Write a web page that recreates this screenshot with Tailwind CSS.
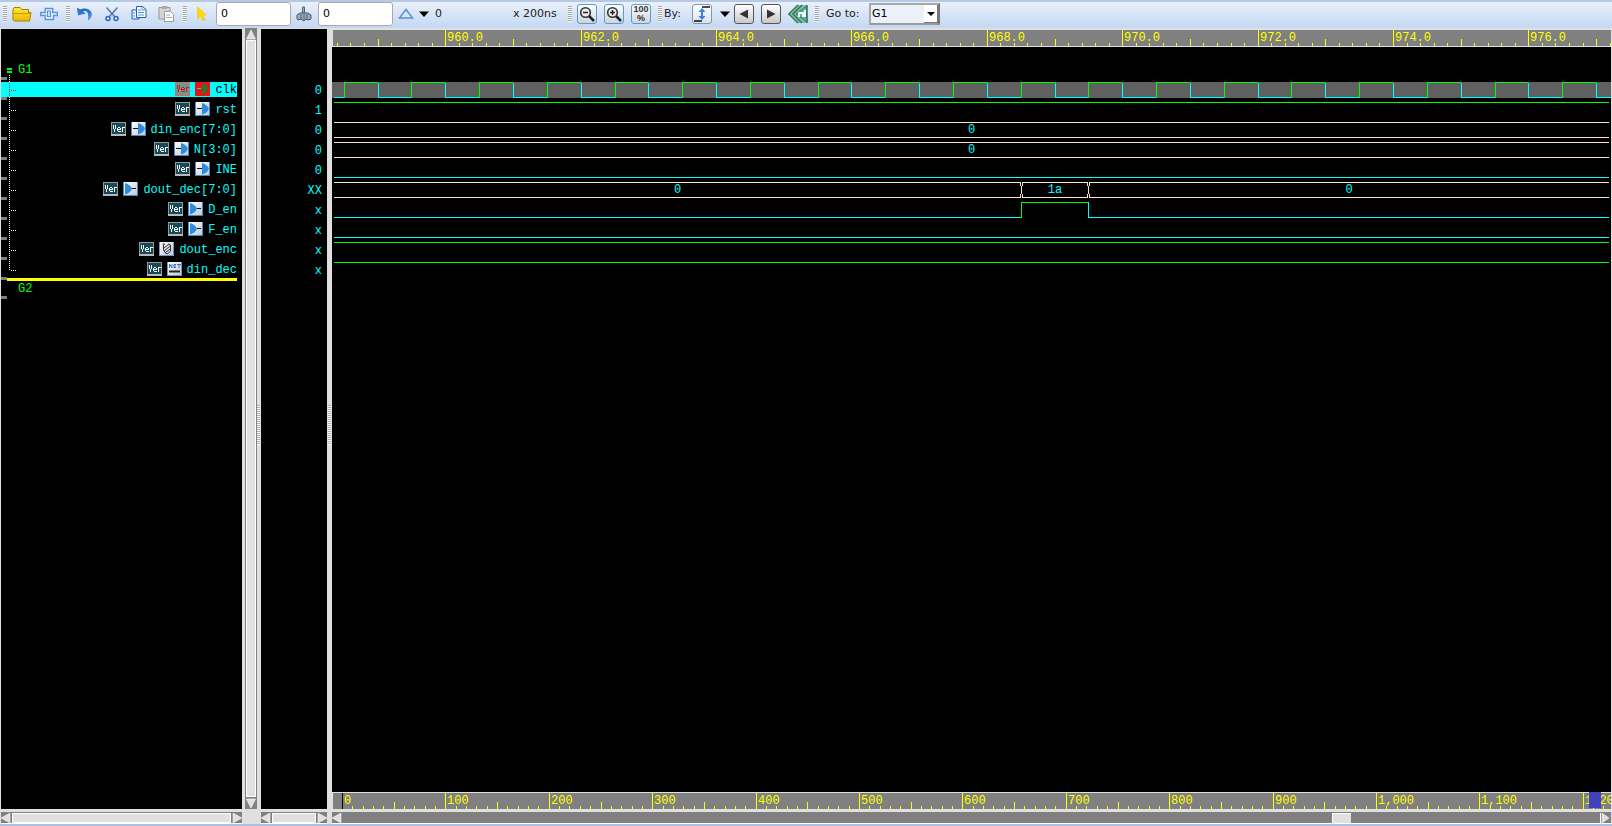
<!DOCTYPE html>
<html lang="en">
<head>
<meta charset="utf-8">
<title>Waveform viewer</title>
<script src="https://cdn.jsdelivr.net/npm/@tailwindcss/browser@4"></script>
</head>
<body class="h-screen overflow-hidden flex flex-col bg-[#e0e0e0] font-['DejaVu_Sans',sans-serif] text-[11px] text-[#222]">

<svg class="absolute size-0" aria-hidden="true">
  <defs>
    <linearGradient id="gold" x1="0" y1="0" x2="0" y2="1"><stop offset="0" stop-color="#ffe93a"/><stop offset="1" stop-color="#eeb800"/></linearGradient>
    <linearGradient id="blue" x1="0" y1="0" x2="0" y2="1"><stop offset="0" stop-color="#1f62b8"/><stop offset="1" stop-color="#5a9be0"/></linearGradient>
    <linearGradient id="tile" x1="0" y1="0" x2="1" y2="1"><stop offset="0" stop-color="#fff"/><stop offset="1" stop-color="#bcc6d0"/></linearGradient>
  </defs>
  <symbol id="ver" viewBox="0 0 15 14">
    <path d="M0 0h15v14H0z" fill="#8e9a9c"/><path d="M0 12h15v2H0z" fill="#b8b8b8"/><path d="M1 1h13v11H1z" fill="#174a58"/>
    <path d="M2 3h1v4H2zM3 7h1v3H3zM4 3h1v4H4zM6 6h1v3H6zM7 5h2v1H7zM9 6h1v1H9zM7 7h3v1H7zM7 9h3v1H7zM11 5h1v5h-1zM12 5h2v1h-2z" fill="#fff"/>
  </symbol>
  <symbol id="verred" viewBox="0 0 15 14">
    <path d="M0 0h15v14H0z" fill="#b07a78"/><path d="M1 1h13v11H1z" fill="#689a94"/>
    <path d="M2 3h1v4H2zM3 7h1v3H3zM4 3h1v4H4zM6 6h1v3H6zM7 5h2v1H7zM9 6h1v1H9zM7 7h3v1H7zM7 9h3v1H7zM11 5h1v5h-1zM12 5h2v1h-2z" fill="#e01010"/>
  </symbol>
  <symbol id="in" viewBox="0 0 15 14">
    <path d="M0 0h15v14H0z" fill="url(#tile)"/><path d="M.5 0v14M14.500 0v14M0 13.500h15" stroke="#4a86c0" fill="none"/>
    <path d="M7 1c4 1 6 3.500 7 5.500-1 3-3 5-7 6z" fill="#2f8be0"/><path d="M2 6.500h5" stroke="#111"/>
  </symbol>
  <symbol id="inred" viewBox="0 0 15 14">
    <path d="M0 0h15v14H0z" fill="#e81414"/><path d="M7 1c4 1 6 3.500 6 5.500-1 3-3 5-6 6z" fill="#35702c"/><path d="M2 6.500h4" stroke="#35c8c8"/>
  </symbol>
  <symbol id="out" viewBox="0 0 15 14">
    <path d="M0 0h15v14H0z" fill="url(#tile)"/><path d="M.5 0v14M14.500 0v14M0 13.500h15" stroke="#4a86c0" fill="none"/>
    <path d="M2 1c4 1 6 3.500 7 5.500-1 3-3 5-7 6z" fill="#2f8be0"/><path d="M9 6.500h4" stroke="#111"/>
  </symbol>
  <symbol id="reg" viewBox="0 0 15 14">
    <path d="M0 0h15v14H0z" fill="url(#tile)"/><path d="M14.500 0v14M.5 0v14M0 13.500h15" stroke="#6f98c0" fill="none"/>
    <path d="M3.500 2h2l-1 1v5l2 3 2 1 3-3V3l-2-1M5 6l5-4M5 9l6-5M6 11l5-4" fill="none" stroke="#333"/>
  </symbol>
  <symbol id="net" viewBox="0 0 15 14">
    <path d="M0 0h15v14H0z" fill="url(#tile)"/><path d="M14.500 0v14M.5 0v14M0 13.500h15" stroke="#6f98c0" fill="none"/>
    <path d="M2.500 6V2l2.500 4V2M9 2.500H7v3h2M7 4h2M10 2.500h4M12 2v4" fill="none" stroke="#2f78b8"/><path d="M2 9.500h11" stroke="#222" stroke-width="2"/>
  </symbol>
</svg>

<!-- Toolbar -->
<header class="h-7 shrink-0 flex items-center border-t-2 border-[#b5c8e4] bg-linear-to-b from-[#eaf1fa] to-[#c3d7f3] pb-[2px]">
  <i class="ml-[3px] w-1 h-4 bg-[repeating-linear-gradient(#a8a8a8_0_1px,#f6f6f6_1px_2px)]"></i>
  <button aria-label="Open" class="ml-[5px]"><svg class="w-5 h-5" viewBox="0 0 20 20"><path d="M1 16V5.500l1-2h6l2 2h6.500v3H19l-1.500 8.500H2.500z" fill="url(#gold)" stroke="#a87f00"/><path d="M1.500 9.500H18" fill="none" stroke="#c89c00"/></svg></button>
  <button aria-label="Signals" class="ml-2"><svg class="w-[18px] h-5" viewBox="0 0 18 20"><path d="M.7 8.500h4.500v-4h7.500v4h4.600v3h-3.800v4H5.200v-4H.7z" fill="#eaf2fc" stroke="#5a94dc" stroke-width="1.400"/><path d="M7.500 7h3v5.500h-3z" fill="#d8e6f7" stroke="#5a94dc" stroke-width="1.200"/></svg></button>
  <i class="ml-2 w-1 h-4 bg-[repeating-linear-gradient(#a8a8a8_0_1px,#f6f6f6_1px_2px)]"></i>
  <button aria-label="Undo" class="ml-[7px]"><svg class="w-4 h-5" viewBox="0 0 16 20"><path d="M0 3.500l1 8 8-2-3-2c4-1.500 6 1 5 8.500h1c3-3 4-7 1-9.500C10 4 6 4 3 5.500z" fill="url(#blue)"/></svg></button>
  <button aria-label="Cut" class="ml-3"><svg class="w-[14px] h-5" viewBox="0 0 14 20"><path d="M1.500 3.500L10 13M12.500 3.500L4 13" stroke="#5578a4" stroke-width="1.500"/><circle cx="3" cy="14.500" r="2" fill="none" stroke="#2868c4" stroke-width="1.500"/><circle cx="11" cy="14.500" r="2" fill="none" stroke="#2868c4" stroke-width="1.500"/></svg></button>
  <button aria-label="Copy" class="ml-3"><svg class="w-4 h-5" viewBox="0 0 16 20"><path d="M1 6h7v9H1z" fill="#eaf2fc" stroke="#1f62b8"/><path d="M5.500 2.500h6l3.500 3v8H5.500z" fill="#fff" stroke="#1f62b8"/><path d="M11 3v3h4M7 6h3M7 8.500h6M7 11h6M2 9h2M2 12h2" fill="none" stroke="#5a90d4"/></svg></button>
  <button aria-label="Paste" class="ml-[11px]"><svg class="w-4 h-5" viewBox="0 0 16 20"><path d="M1 3.500h11V15H1z" fill="#d4d4d4" stroke="#9a9a9a"/><path d="M4 2h5v3H4z" fill="#aaa"/><path d="M6.500 7.500h6l3 3v7h-9z" fill="#fff" stroke="#999"/><path d="M8 11h4M8 13.500h6" stroke="#aaa"/></svg></button>
  <i class="ml-[9px] w-1 h-4 bg-[repeating-linear-gradient(#a8a8a8_0_1px,#f6f6f6_1px_2px)]"></i>
  <button aria-label="Select" class="ml-[10px]"><svg class="w-[10px] h-5" viewBox="0 0 10 20"><path d="M.5 3v12l3-3 2.500 5 2-1-2-5h3.500z" fill="#ffdc00" stroke="#e8c000" stroke-width=".5"/></svg></button>
  <input aria-label="Cursor time" value="0" class="ml-[9px] w-[75px] h-6 bg-white border border-[#aaa] rounded-[3px] px-1 pb-px text-black">
  <button aria-label="Marker" class="ml-[5px]"><svg class="w-4 h-5" viewBox="0 0 16 20"><path d="M6.500 3h2v6h-2z" fill="#9cb0c4" stroke="#51657a"/><path d="M1 11l3-2h8l3 2v4l-3 1-2-1-2 2-3-2-3 1-1-1z" fill="#9cabb8" stroke="#465664"/><path d="M5 10v5M8 10v6M11 10v5" stroke="#51657a"/></svg></button>
  <input aria-label="Marker time" value="0" class="ml-[6px] w-[75px] h-6 bg-white border border-[#aaa] rounded-[3px] px-1 pb-px text-black">
  <button aria-label="Delta" class="ml-[5px]"><svg class="w-4 h-5" viewBox="0 0 16 20"><path d="M8 5.500L1.500 14h13z" fill="#d8e6f8" stroke="#5a90d4" stroke-width="1.500"/></svg></button>
  <button aria-label="Delta options" class="ml-[5px]"><svg class="w-[10px] h-5" viewBox="0 0 10 20"><path d="M0 7.500h10L5 13z" fill="#000"/></svg></button>
  <output class="ml-[6px] w-[78px]">0</output>
  <span class="w-[46px]">x 200ns</span>
  <i class="ml-[9px] w-1 h-4 bg-[repeating-linear-gradient(#a8a8a8_0_1px,#f6f6f6_1px_2px)]"></i>
  <button aria-label="Zoom out" class="ml-[5px] size-5 rounded-[3px] border border-[#5b9bc8] bg-linear-to-b from-white to-[#cdd5dc]"><svg class="size-[18px]" viewBox="0 0 18 18"><circle cx="7.500" cy="7.500" r="4.800" fill="#eee" stroke="#333" stroke-width="1.600"/><path d="M5 7.500h5" stroke="#222" stroke-width="1.500"/><path d="M11 11l5 5" stroke="#222" stroke-width="2.500"/></svg></button>
  <button aria-label="Zoom in" class="ml-[7px] size-5 rounded-[3px] border border-[#5b9bc8] bg-linear-to-b from-white to-[#cdd5dc]"><svg class="size-[18px]" viewBox="0 0 18 18"><circle cx="7.500" cy="7.500" r="4.800" fill="#eee" stroke="#333" stroke-width="1.600"/><path d="M5 7.500h5M7.500 5v5" stroke="#222" stroke-width="1.500"/><path d="M11 11l5 5" stroke="#222" stroke-width="2.500"/></svg></button>
  <button aria-label="Zoom 100%" class="ml-[7px] size-5 rounded-[3px] border border-[#5b9bc8] bg-linear-to-b from-white to-[#cdd5dc] flex flex-col items-center justify-center font-['Liberation_Sans',sans-serif] text-[9px] leading-[9px] font-bold text-[#333]"><span>100</span><span>%</span></button>
  <i class="ml-[7px] w-1 h-4 bg-[repeating-linear-gradient(#a8a8a8_0_1px,#f6f6f6_1px_2px)]"></i>
  <span class="ml-[2px] w-7">By:</span>
  <button aria-label="Any edge" class="size-5 rounded-[3px] border border-[#8098b8] bg-linear-to-b from-white to-[#dde2ea]"><svg class="size-[18px]" viewBox="0 0 18 18"><path d="M9 2h8M1 16h8" stroke="#111" stroke-width="1.600"/><path d="M9 3l3.500 4h-2.500v4h2.500L9 15l-3.500-4H8V7H5.500z" fill="#3a80e4"/></svg></button>
  <button aria-label="Edge options" class="ml-2"><svg class="w-[10px] h-5" viewBox="0 0 10 20"><path d="M0 7.500h10L5 13z" fill="#000"/></svg></button>
  <button aria-label="Previous edge" class="ml-1 size-5 rounded-[3px] border border-[#555] bg-linear-to-b from-white to-[#c8c8c8]"><svg class="size-[18px]" viewBox="0 0 18 18"><path d="M13 4.500v9L4.500 9z" fill="#333"/></svg></button>
  <button aria-label="Next edge" class="ml-[7px] size-5 rounded-[3px] border border-[#555] bg-linear-to-b from-white to-[#c8c8c8]"><svg class="size-[18px]" viewBox="0 0 18 18"><path d="M5 4.500v9L13.500 9z" fill="#333"/></svg></button>
  <button aria-label="Trace" class="ml-[7px]"><svg class="size-5" viewBox="0 0 20 20"><path d="M10 1L1 10l9 9h9V1z" fill="#7cc4a8"/><path d="M10 1L.8 10l9.200 9M14 1L5 10l9 9M19 1v18" fill="none" stroke="#38785c" stroke-width="1.600"/><path d="M18.500 2v16L8 10z" fill="#58b49c" stroke="#38785c"/><path d="M11 13V9h4v3h2V6" fill="none" stroke="#fff" stroke-width="1.800"/></svg></button>
  <i class="ml-[7px] w-1 h-4 bg-[repeating-linear-gradient(#a8a8a8_0_1px,#f6f6f6_1px_2px)]"></i>
  <label for="goto" class="ml-[7px] w-[43px]">Go to:</label>
  <div class="relative">
    <select id="goto" class="block appearance-none w-[71px] h-[22px] bg-[#eaf1f8] border-2 border-[#a8a8a8] border-r-[#777] border-b-[#999] pl-px text-black"><option>G1</option><option>G2</option></select>
    <span class="absolute right-[2px] top-[2px] bottom-[2px] w-[14px] bg-white border-r border-b border-[#777] pointer-events-none grid place-items-center"><svg class="w-2 h-1" viewBox="0 0 8 4"><path d="M0 0h8L4 4z"/></svg></span>
  </div>
</header>

<main class="flex-1 min-h-0 flex pl-px pr-px pt-px border-b-2 border-[#a9bfe4]">

  <!-- Signal names -->
  <section class="w-[241px] shrink-0 flex flex-col">
    <div class="relative flex-1 bg-black font-['Liberation_Mono',monospace] text-[12px] leading-[15px] text-[#00ffff]">
      <h2 class="pt-[34px] pl-[6px] flex items-center gap-[6px] text-[#00ff00]"><i class="w-[5px] h-[5px] border-y-2 border-[#00ff00]"></i>G1</h2>
      <ul id="signals" class="pt-1 mr-[5px]"></ul>
      <div class="mt-[-4px] ml-[6px] mr-[5px] h-[3px] bg-[#ffff00]"></div>
      <h2 class="pl-[17px] pt-px text-[#00ff00]">G2</h2>
      <svg class="absolute left-0 top-0 w-5 h-[280px]" shape-rendering="crispEdges" id="tree"></svg>
    </div>
    <div class="h-[3px]"></div>
    <div class="h-3 bg-[#808080] flex border-y border-y-[#808080] border-b-white">
      <button aria-label="Scroll names left" class="w-[11px]"><svg class="w-[10px] h-[10px]" viewBox="0 0 10 10"><path d="M0 5l9-5v10z" fill="#e0e0e0" stroke="#fff" stroke-width=".5"/></svg></button>
      <div class="flex-1 bg-[#e0e0e0] border border-white"></div>
      <button aria-label="Scroll names right" class="w-[11px] pl-px"><svg class="w-[10px] h-[10px]" viewBox="0 0 10 10"><path d="M10 5L1 0v10z" fill="#e0e0e0" stroke="#fff" stroke-width=".5"/></svg></button>
    </div>
  </section>

  <!-- Vertical scroll bar -->
  <div class="w-[15px] shrink-0 pl-[3px] pb-[15px] -mt-px flex">
    <div class="w-3 flex flex-col bg-[#808080] px-px">
      <button aria-label="Scroll up" class="h-3"><svg class="w-[10px] h-[11px]" viewBox="0 0 10 11"><path d="M5 1l4.500 9h-9z" fill="#e0e0e0" stroke="#fff" stroke-width=".6"/></svg></button>
      <div class="flex-1 bg-[#e0e0e0] border border-white"></div>
      <button aria-label="Scroll down" class="h-3"><svg class="w-[10px] h-[11px]" viewBox="0 0 10 11"><path d="M5 10l4.500-9h-9z" fill="#e0e0e0" stroke="#fff" stroke-width=".6"/></svg></button>
    </div>
  </div>
  <div class="w-1 shrink-0 pt-[376px]"><i class="block w-[3px] h-10 bg-[repeating-linear-gradient(#aaa_0_1px,#fff_1px_2px)]"></i></div>

  <!-- Signal values -->
  <section class="w-[66px] shrink-0 flex flex-col">
    <div class="flex-1 bg-black font-['Liberation_Mono',monospace] text-[12px] leading-5 text-[#00ffff]">
      <ul class="pt-[52px] pr-[5px] text-right"><li>0</li><li>1</li><li>0</li><li>0</li><li>0</li><li>XX</li><li>x</li><li>x</li><li>x</li><li>x</li></ul>
    </div>
    <div class="h-[3px]"></div>
    <div class="h-3 bg-[#808080] flex border-y border-y-[#808080] border-b-white">
      <button aria-label="Scroll values left" class="w-[11px]"><svg class="w-[10px] h-[10px]" viewBox="0 0 10 10"><path d="M0 5l9-5v10z" fill="#e0e0e0" stroke="#fff" stroke-width=".5"/></svg></button>
      <div class="flex-1 bg-[#e0e0e0] border border-white"></div>
      <button aria-label="Scroll values right" class="w-[11px] pl-px"><svg class="w-[10px] h-[10px]" viewBox="0 0 10 10"><path d="M10 5L1 0v10z" fill="#e0e0e0" stroke="#fff" stroke-width=".5"/></svg></button>
    </div>
  </section>
  <div class="w-[5px] shrink-0 pt-[376px] pl-px"><i class="block w-[3px] h-10 bg-[repeating-linear-gradient(#aaa_0_1px,#fff_1px_2px)]"></i></div>

  <!-- Waveforms -->
  <section class="flex-1 min-w-0 flex flex-col">
    <div class="pt-px pl-px"><svg id="ruler" class="block w-full h-4 bg-[#808080] font-['Liberation_Mono',monospace] text-[12px]" shape-rendering="crispEdges"></svg></div>
    <div class="mt-px flex-1 bg-black font-['Liberation_Mono',monospace] text-[12px] leading-[14px] text-[#00ffff] pt-[35px]">
      <svg id="clock" class="block w-full h-4 mb-1 bg-[#606060]" fill="none" shape-rendering="crispEdges"></svg>
      <div class="ml-[2px] mr-[2px]">
        <div class="h-4 mb-1 border-t border-[#00ff00]"></div>
        <div class="h-4 mb-1 border-y border-[#ffe4c4] text-center">0</div>
        <div class="h-4 mb-1 border-y border-[#ffe4c4] text-center">0</div>
        <div class="h-4 mb-1 border-b border-[#00ffff]"></div>
        <div class="h-4 mb-1 flex text-center">
          <div class="w-[687px] border-y border-[#ffe4c4]">0</div>
          <svg class="w-[3px] h-4 -mx-px" viewBox="0 0 3 16" fill="none" stroke="#ffe4c4" shape-rendering="crispEdges"><path d="M.5 0v4M2.500 0v4M1.500 4v8M.5 12v4M2.500 12v4"/></svg>
          <div class="w-[66px] border-y border-[#ffe4c4]">1a</div>
          <svg class="w-[3px] h-4 -mx-px" viewBox="0 0 3 16" fill="none" stroke="#ffe4c4" shape-rendering="crispEdges"><path d="M.5 0v4M2.500 0v4M1.500 4v8M.5 12v4M2.500 12v4"/></svg>
          <div class="flex-1 border-y border-[#ffe4c4]">0</div>
        </div>
        <div class="h-4 mb-1 flex">
          <div class="w-[687px] border-b border-[#00ffff]"></div>
          <div class="w-[67px] border-t border-l border-[#00ff00]"></div>
          <div class="flex-1 border-b border-l border-[#00ffff]"></div>
        </div>
        <div class="h-4 mb-1 border-b border-[#00ffff]"></div>
        <div class="h-4 mb-1 border-t border-[#00ff00]"></div>
        <div class="h-4 mb-1 border-t border-[#00ff00]"></div>
      </div>
    </div>
    <div class="relative pt-px pl-px">
      <svg id="overview" class="block w-full h-4 bg-[#808080] font-['Liberation_Mono',monospace] text-[12px]" shape-rendering="crispEdges"></svg>
      <i class="absolute right-[10px] top-0 w-3 h-4 bg-[#4040c0]"></i>
    </div>
    <div class="h-[3px]"></div>
    <div class="h-3 bg-[#808080] flex border-y border-y-[#808080] border-b-white">
      <button aria-label="Scroll waves left" class="w-[11px]"><svg class="w-[10px] h-[10px]" viewBox="0 0 10 10"><path d="M0 5l9-5v10z" fill="#e0e0e0" stroke="#fff" stroke-width=".5"/></svg></button>
      <div class="flex-1 flex justify-end pr-[249px]"><div class="w-[19px] bg-[#e0e0e0] border-t border-l border-white"></div></div>
      <button aria-label="Scroll waves right" class="w-[11px] border-l border-white"><svg class="w-[10px] h-[10px]" viewBox="0 0 10 10"><path d="M8 5L1 0v10z" fill="#e0e0e0" stroke="#fff" stroke-width=".5"/></svg></button>
    </div>
  </section>
</main>

<script>
const signals = [['clk','in'],['rst','in'],['din_enc[7:0]','in'],['N[3:0]','in'],['INE','in'],['dout_dec[7:0]','out'],['D_en','out'],['F_en','out'],['dout_enc','reg'],['din_dec','net']];
document.getElementById('signals').innerHTML = signals.map(([name, kind], i) => {
  const on = i === 0;
  return `<li class="h-[15px] mb-[5px] flex justify-end gap-[5px] ${on ? 'bg-[#00ffff] text-black' : ''}">` +
    `<svg class="w-[15px] h-[14px]"><use href="#${on ? 'verred' : 'ver'}"/></svg>` +
    `<svg class="w-[15px] h-[14px]"><use href="#${on ? 'inred' : kind}"/></svg><span class="pt-px">${name}</span></li>`;
}).join('');

// Group tree: dotted trunk and branches, with a grey drop mark between rows
let tree = '<path d="M8.500 46v195" stroke="#fff" stroke-dasharray="1 1"/>';
for (let i = 0; i < 10; i++) tree += `<path d="M10 ${61.5 + i * 20}h6" stroke="${i ? '#fff' : '#f00'}" stroke-dasharray="1 1"/>`;
for (let i = 0; i < 12; i++) tree += `<path d="M0 ${i < 11 ? 49.5 + i * 20 : 268.5}h6" stroke="#808080" stroke-width="3"/>`;
tree += '<path d="M8.500 53v15" stroke="#0ff"/><path d="M8.500 54v14" stroke="#f00" stroke-dasharray="1 1"/>';
document.getElementById('tree').innerHTML = tree;

// Rulers: a long tick with a label every ten steps, a medium one every five
function ruler(id, origin, step, from, to, label) {
  let out = '';
  for (let i = from; i <= to; i++) {
    const x = Math.round(origin + i * step);
    const h = i % 10 === 0 ? 16 : i % 5 === 0 ? 7 : 3;
    out += `<path d="M${x + .5} 16v-${h}" stroke="${label(i) === '0' ? '#000' : '#ff0'}"/>`;
    if (i % 10 === 0) out += `<text x="${x + 2}" y="11" fill="#ff0">${label(i)}</text>`;
  }
  document.getElementById(id).innerHTML = out;
}
ruler('ruler', 112.2, 13.54, -8, 99, i => (960 + i / 5).toFixed(1));
ruler('overview', 9, 10.34, 0, 122, i => (i * 10).toLocaleString('en-US'));

// Clock: green while high, cyan while low
const at = n => Math.round(11.8 + n * 67.69);
let clock = '<path d="M2 15.500h10" stroke="#0ff"/>';
for (let i = 0; i < 20; i++) {
  clock += `<path d="M${at(i) + .5} 16V.5H${at(i + .5)}" stroke="#0f0"/>`;
  clock += `<path d="M${at(i + .5) + .5} 1v14.500H${at(i + 1)}" stroke="#0ff"/>`;
}
document.getElementById('clock').innerHTML = clock;
</script>
</body>
</html>
